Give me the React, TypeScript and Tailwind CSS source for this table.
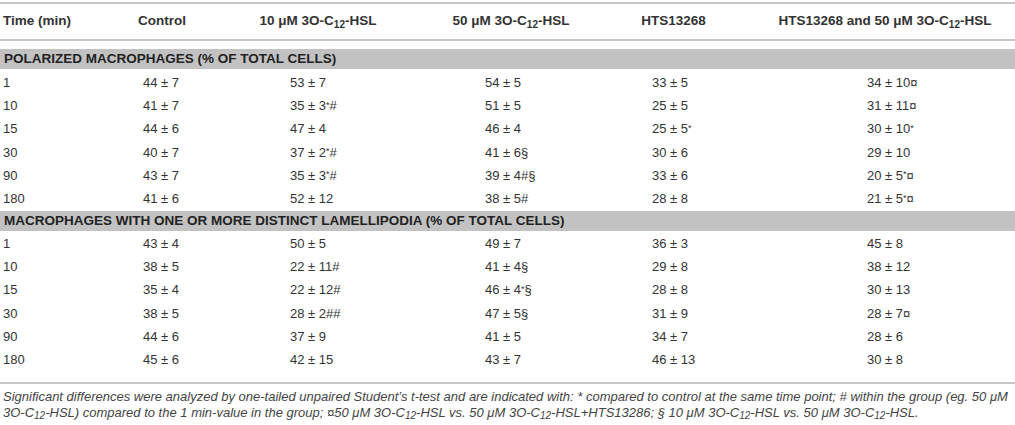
import React from "react";

type Row = [string, string, string, string, string, string];

const group1: Row[] = [
  ["1", "44 ± 7", "53 ± 7", "54 ± 5", "33 ± 5", "34 ± 10¤"],
  ["10", "41 ± 7", "35 ± 3*#", "51 ± 5", "25 ± 5", "31 ± 11¤"],
  ["15", "44 ± 6", "47 ± 4", "46 ± 4", "25 ± 5*", "30 ± 10*"],
  ["30", "40 ± 7", "37 ± 2*#", "41 ± 6§", "30 ± 6", "29 ± 10"],
  ["90", "43 ± 7", "35 ± 3*#", "39 ± 4#§", "33 ± 6", "20 ± 5*¤"],
  ["180", "41 ± 6", "52 ± 12", "38 ± 5#", "28 ± 8", "21 ± 5*¤"],
];

const group2: Row[] = [
  ["1", "43 ± 4", "50 ± 5", "49 ± 7", "36 ± 3", "45 ± 8"],
  ["10", "38 ± 5", "22 ± 11#", "41 ± 4§", "29 ± 8", "38 ± 12"],
  ["15", "35 ± 4", "22 ± 12#", "46 ± 4*§", "28 ± 8", "30 ± 13"],
  ["30", "38 ± 5", "28 ± 2##", "47 ± 5§", "31 ± 9", "28 ± 7¤"],
  ["90", "44 ± 6", "37 ± 9", "41 ± 5", "34 ± 7", "28 ± 6"],
  ["180", "45 ± 6", "42 ± 15", "43 ± 7", "46 ± 13", "30 ± 8"],
];

function Cell({ v }: { v: string }) {
  const parts = v.split("*");
  return (
    <span className="whitespace-nowrap">
      {parts.map((p, i) => (
        <React.Fragment key={i}>
          {i > 0 && <sup className="text-[9px] top-[-0.3em]">*</sup>}
          {p}
        </React.Fragment>
      ))}
    </span>
  );
}

function DataRow({ r }: { r: Row }) {
  return (
    <div className="grid grid-cols-[140px_147px_195px_167px_215px_1fr] pl-[3px] h-[23.3px] items-center text-[13px] text-[#333]">
      {r.map((v, i) => (
        <div key={i}>
          <Cell v={v} />
        </div>
      ))}
    </div>
  );
}

function C12() {
  return (
    <>
      C<sub className="text-[10px]">12</sub>
    </>
  );
}

function Band({ children }: { children: React.ReactNode }) {
  return (
    <div className="h-[20px] bg-[#c2c2c2] flex items-center pl-[4px] font-bold text-[13.5px] text-[#222] whitespace-nowrap">
      {children}
    </div>
  );
}

export default function App() {
  return (
    <div
      className="w-[1015px] h-[425px] bg-white pt-[2px] overflow-hidden"
      style={{ fontFamily: '"Liberation Sans", Arial, Helvetica, sans-serif' }}
    >
      <div className="h-[2px] bg-[#c6c6c6]" />
      <div className="grid grid-cols-[100px_124px_188px_198px_145px_1fr] h-[35px] items-center font-bold text-[13.5px] text-[#333] whitespace-nowrap">
        <div className="pl-[3px]">Time (min)</div>
        <div className="flex justify-center">Control</div>
        <div className="flex justify-center">
          <span>
            10 μM 3O-<C12 />-HSL
          </span>
        </div>
        <div className="flex justify-center">
          <span>
            50 μM 3O-<C12 />-HSL
          </span>
        </div>
        <div className="flex justify-center pr-[18px]">HTS13268</div>
        <div className="flex justify-center">
          <span>
            HTS13268 and 50 μM 3O-<C12 />-HSL
          </span>
        </div>
      </div>
      <div className="h-[2px] bg-[#c6c6c6]" />
      <div className="h-[8px]" />
      <Band>POLARIZED MACROPHAGES (% OF TOTAL CELLS)</Band>
      <div className="mt-[2px]">
        {group1.map((r, i) => (
          <DataRow key={i} r={r} />
        ))}
      </div>
      <Band>MACROPHAGES WITH ONE OR MORE DISTINCT LAMELLIPODIA (% OF TOTAL CELLS)</Band>
      <div className="mt-[1px]">
        {group2.map((r, i) => (
          <DataRow key={i} r={r} />
        ))}
      </div>
      <div className="mt-[10px] h-[2px] bg-[#c6c6c6]" />
      <div className="pt-[5px] pl-[3px] italic text-[13px] leading-[16px] text-[#444] whitespace-nowrap">
        <div>
          Significant differences were analyzed by one-tailed unpaired Student’s t-test and are indicated with: * compared to control at the same time point; # within the group (eg. 50 μM
        </div>
        <div>
          3O-<C12 />-HSL) compared to the 1 min-value in the group; ¤50 μM 3O-<C12 />-HSL vs. 50 μM 3O-<C12 />-HSL+HTS13286; § 10 μM 3O-<C12 />-HSL vs. 50 μM 3O-<C12 />-HSL.
        </div>
      </div>
    </div>
  );
}
